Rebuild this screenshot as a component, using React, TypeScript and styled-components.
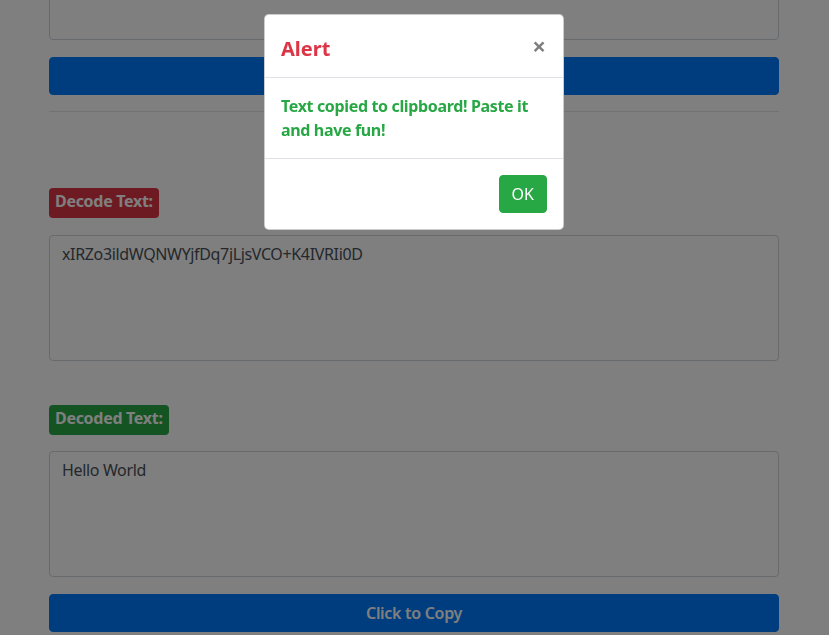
import React from "react";
import styled, { createGlobalStyle } from "styled-components";

const Global = createGlobalStyle`
  html, body { margin: 0; padding: 0; background: #fff; overflow: hidden; }
  body { font-family: "Noto Sans", "Open Sans", sans-serif; font-size: 16px; line-height: 1.5; color: #212529; }
  * { box-sizing: border-box; }
`;

const Page = styled.div`
  width: 829px;
  height: 635px;
  overflow: hidden;
`;

const Container = styled.div`
  width: 730px;
  margin: -86px 0 0 49px;
  display: flex;
  flex-direction: column;
`;

const TextArea = styled.div`
  height: 126px;
  border: 1px solid #ced4da;
  border-radius: 4px;
  padding: 6px 12px;
  color: #495057;
  font-size: 16px;
  line-height: 24px;
  letter-spacing: -0.35px;
  background: #fff;
`;

const PrimaryButton = styled.button<{ $mt: number }>`
  margin-top: ${(p) => p.$mt}px;
  height: 38px;
  width: 100%;
  border: 1px solid #007bff;
  border-radius: 4px;
  background: #007bff;
  color: #fff;
  font-family: inherit;
  font-size: 16px;
  font-weight: 600;
  letter-spacing: -0.3px;
`;

const Rule = styled.hr`
  margin: 16px 0 0;
  border: 0;
  border-top: 1px solid rgba(0, 0, 0, 0.1);
`;

const Badge = styled.span<{ $bg: string; $mt: number; $mb: number }>`
  align-self: flex-start;
  margin-top: ${(p) => p.$mt}px;
  margin-bottom: ${(p) => p.$mb}px;
  background: ${(p) => p.$bg};
  color: #fff;
  font-weight: 700;
  font-size: 16px;
  line-height: 22px;
  padding: 2px 6px 6px;
  border-radius: 4px;
  letter-spacing: -0.3px;
`;

const Backdrop = styled.div`
  position: fixed;
  inset: 0;
  background: rgba(0, 0, 0, 0.5);
  display: flex;
  justify-content: flex-start;
  align-items: flex-start;
`;

const Modal = styled.div`
  margin: 14px 0 0 264px;
  width: 300px;
  background: #fff;
  border: 1px solid rgba(0, 0, 0, 0.2);
  border-radius: 5px;
  display: flex;
  flex-direction: column;
`;

const ModalHeader = styled.div`
  display: flex;
  justify-content: space-between;
  align-items: flex-start;
  padding: 16px;
  border-bottom: 1px solid #dee2e6;
`;

const Title = styled.h5`
  margin: 0;
  padding-top: 3px;
  height: 30px;
  font-size: 20px;
  line-height: 30px;
  font-weight: 700;
  color: #dc3545;
`;

const Close = styled.button`
  border: 0;
  background: transparent;
  padding: 0;
  margin: 0 1px 0 0;
  font-family: inherit;
  font-size: 24px;
  line-height: 30px;
  font-weight: 700;
  color: #000;
  opacity: 0.5;
`;

const ModalBody = styled.div`
  padding: 16px;
  color: #28a745;
  font-weight: 700;
  font-size: 16px;
  line-height: 24px;
  letter-spacing: -0.35px;
`;

const ModalFooter = styled.div`
  display: flex;
  justify-content: flex-end;
  padding: 12px;
  border-top: 1px solid #dee2e6;
`;

const OkButton = styled.button`
  margin: 4px;
  height: 38px;
  padding: 0 12px;
  border: 1px solid #28a745;
  border-radius: 4px;
  background: #28a745;
  color: #fff;
  font-family: inherit;
  font-size: 16px;
`;

export default function App() {
  return (
    <>
      <Global />
      <Page>
        <Container>
          <TextArea />
          <PrimaryButton $mt={17} />
          <Rule />
          <Badge $bg="#dc3545" $mt={76} $mb={17}>Decode Text:</Badge>
          <TextArea>xIRZo3ildWQNWYjfDq7jLjsVCO+K4IVRIi0D</TextArea>
          <Badge $bg="#28a745" $mt={44} $mb={16}>Decoded Text:</Badge>
          <TextArea>Hello World</TextArea>
          <PrimaryButton $mt={17}>Click to Copy</PrimaryButton>
        </Container>
        <Backdrop>
          <Modal>
            <ModalHeader>
              <Title>Alert</Title>
              <Close aria-label="Close">×</Close>
            </ModalHeader>
            <ModalBody>Text copied to clipboard! Paste it and have fun!</ModalBody>
            <ModalFooter>
              <OkButton>OK</OkButton>
            </ModalFooter>
          </Modal>
        </Backdrop>
      </Page>
    </>
  );
}
